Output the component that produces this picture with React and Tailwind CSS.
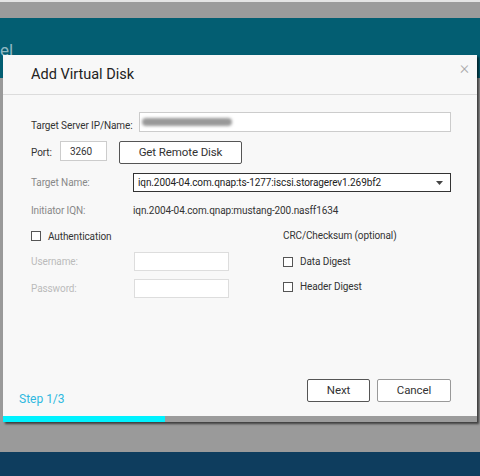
function Checkbox({ label, className = '' }) {
  return (
    <label className={`flex items-center gap-[7px] ${className}`}>
      <span className="w-[10px] h-[10px] border border-[#555] bg-white" />
      <span>{label}</span>
    </label>
  )
}

export default function App() {
  return (
    <div className="relative w-[480px] h-[476px] overflow-hidden bg-[#9a9a9a] text-[10px] tracking-[-0.1px] text-[#333]" style={{ fontFamily: 'Roboto, "Liberation Sans", sans-serif' }}>
      {/* page behind the dialog */}
      <div className="flex flex-col h-full">
        <div className="h-[2px] bg-[#e4e4e4]" />
        <div className="h-[16px] bg-[#9b9b9b]" />
        <div className="h-[60px] bg-[#035e72] flex items-end pb-[19px]">
          <span className="text-[17px] text-[#8fb8c2] leading-none">el</span>
        </div>
        <div className="flex-1 bg-[#9a9a9a]" />
        <div className="h-[24px] bg-[#0e3d5e]" />
      </div>

      {/* dialog */}
      <div className="absolute left-[3px] top-[55px] w-[474px] h-[367px] bg-[#f8f8f8] flex flex-col shadow-[2px_2px_2px_rgba(0,0,0,0.6)]">
        <div className="h-[40px] border-b border-[#dcdcdc] flex items-center justify-between pl-[28px] pr-[8px]">
          <h1 className="text-[14.5px] tracking-normal text-[#222] mt-[1px]">Add Virtual Disk</h1>
          <span className="self-start mt-[4px] text-[#aaa] text-[18px] font-light leading-none">×</span>
        </div>

        <div className="flex-1 pl-[28px] pr-[26px] flex flex-col">
          <div className="flex items-center mt-[17px] h-[20px]">
            <span className="w-[108px] pt-[6px] whitespace-nowrap">Target Server IP/Name:</span>
            <div className="flex-1 h-[20px] border border-[#ccc] bg-white flex items-center pl-[2px]">
              <span className="w-[90px] h-[8px] rounded-full bg-[#999] blur-[1.5px]" />
            </div>
          </div>

          <div className="flex items-center mt-[9px] h-[23px]">
            <span className="w-[29px]">Port:</span>
            <div className="w-[47px] h-[20px] border border-[#ccc] bg-white pl-[9px] pt-[2px] self-start">3260</div>
            <button className="ml-[12px] w-[123px] h-[23px] border border-[#555] rounded-[2px] bg-white text-[11.5px] text-[#333]">Get Remote Disk</button>
          </div>

          <div className="flex items-center mt-[9px] h-[19px]">
            <span className="w-[102px] text-[#888]">Target Name:</span>
            <div className="flex-1 h-[19px] border border-[#333] bg-white flex items-center justify-between pl-[4px] pr-[7px]">
              <span className="text-[#222]">iqn.2004-04.com.qnap:ts-1277:iscsi.storagerev1.269bf2</span>
              <svg width="7" height="4" viewBox="0 0 7 4"><path d="M0 0h7L3.5 4z" fill="#444" /></svg>
            </div>
          </div>

          <div className="flex items-center mt-[11px]">
            <span className="w-[102px] text-[#888]">Initiator IQN:</span>
            <span className="text-[#333]">iqn.2004-04.com.qnap:mustang-200.nasff1634</span>
          </div>

          <div className="flex mt-[12px]">
            <div className="w-[252px] flex flex-col">
              <Checkbox label="Authentication" className="h-[12px]" />
              <div className="flex items-center mt-[10px]">
                <span className="w-[103px] text-[#bbb]">Username:</span>
                <div className="w-[95px] h-[19px] border border-[#ddd] bg-white" />
              </div>
              <div className="flex items-center mt-[8px]">
                <span className="w-[103px] text-[#bbb]">Password:</span>
                <div className="w-[95px] h-[19px] border border-[#ddd] bg-white" />
              </div>
            </div>
            <div className="flex flex-col">
              <span className="h-[12px] leading-[12px]">CRC/Checksum (optional)</span>
              <Checkbox label="Data Digest" className="mt-[12px]" />
              <Checkbox label="Header Digest" className="mt-[10px]" />
            </div>
          </div>

          <div className="flex-1" />

          <div className="flex items-end justify-between -ml-[12px] mb-[9px]">
            <span className="text-[12px] tracking-normal text-[#2fb8e0] mb-[-1px]">Step 1/3</span>
            <div className="flex gap-[7px] mb-[5px]">
              <button className="w-[63px] h-[23px] border border-[#555] rounded-[2px] bg-white text-[11.5px] text-[#333]">Next</button>
              <button className="w-[74px] h-[23px] border border-[#999] rounded-[2px] bg-white text-[11.5px] text-[#333]">Cancel</button>
            </div>
          </div>
        </div>

        <div className="h-[6px] flex">
          <div className="w-[162px] bg-[#00f2ff]" />
          <div className="flex-1 bg-[#9c9c9c]" />
        </div>
      </div>
    </div>
  )
}
